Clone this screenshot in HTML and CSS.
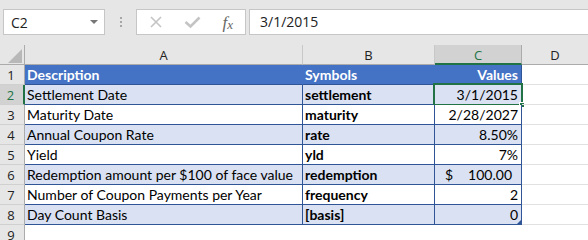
FILE: index.html
```html
<!DOCTYPE html>
<html>
<head>
<meta charset="utf-8">
<link rel="stylesheet" href="styles.css">
</head>
<body>
<div class="toolbar">
  <div class="namebox"><span class="nb-text">C2</span><span class="nb-arrow"></span></div>
  <div class="dots"><i></i><i></i><i></i></div>
  <div class="fbtns">
    <svg class="ico" width="14" height="14" viewBox="0 0 14 14"><path d="M2 2 L12 12 M12 2 L2 12" stroke="#c4c4c4" stroke-width="1.6" fill="none"/></svg>
    <svg class="ico" width="17" height="14" viewBox="0 0 17 14"><path d="M1.5 7 L6.5 11.5 L15.5 2.5" stroke="#c4c4c4" stroke-width="2.6" fill="none"/></svg>
    <span class="fx">f<span class="fxx">x</span></span>
  </div>
  <div class="finput">3/1/2015</div>
</div>
<div class="sheet">
  <div class="corner"><svg width="24" height="20" viewBox="0 0 24 20"><polygon points="8,18 22,18 22,4" fill="#b8b8b8"/></svg></div>
  <div class="ch">A</div>
  <div class="ch">B</div>
  <div class="ch sel">C</div>
  <div class="ch last">D</div>

  <div class="rh">1</div>
  <div class="c hd">Description</div>
  <div class="c hd">Symbols</div>
  <div class="c hd r end">Values</div>
  <div class="c e"></div>

  <div class="rh rsel">2</div>
  <div class="c bd">Settlement Date</div>
  <div class="c bd b">settlement</div>
  <div class="c bd r end active">3/1/2015<span class="selbox"><span class="handle"></span></span></div>
  <div class="c e"></div>

  <div class="rh">3</div>
  <div class="c wt">Maturity Date</div>
  <div class="c wt b">maturity</div>
  <div class="c wt r end">2/28/2027</div>
  <div class="c e"></div>

  <div class="rh">4</div>
  <div class="c bd">Annual Coupon Rate</div>
  <div class="c bd b">rate</div>
  <div class="c bd r end">8.50%</div>
  <div class="c e"></div>

  <div class="rh">5</div>
  <div class="c wt">Yield</div>
  <div class="c wt b">yld</div>
  <div class="c wt r end">7%</div>
  <div class="c e"></div>

  <div class="rh">6</div>
  <div class="c bd">Redemption amount per $100 of face value</div>
  <div class="c bd b">redemption</div>
  <div class="c bd end acct"><span>$</span><span>100.00</span></div>
  <div class="c e"></div>

  <div class="rh">7</div>
  <div class="c wt">Number of Coupon Payments per Year</div>
  <div class="c wt b">frequency</div>
  <div class="c wt r end">2</div>
  <div class="c e"></div>

  <div class="rh">8</div>
  <div class="c bd">Day Count Basis</div>
  <div class="c bd b">[basis]</div>
  <div class="c bd r end lastc">0<span class="tri"></span></div>
  <div class="c e"></div>

  <div class="rh">9</div>
  <div class="c e"></div>
  <div class="c e"></div>
  <div class="c e"></div>
  <div class="c e"></div>
</div>
</body>
</html>
```
FILE: styles.css
```css
* { box-sizing: border-box; }
html, body { margin: 0; padding: 0; }
body {
  width: 588px;
  height: 240px;
  overflow: hidden;
  background: #ffffff;
  font-family: Lato, "Open Sans", sans-serif;
}
.toolbar {
  height: 45px;
  background: #e6e6e6;
  display: flex;
  align-items: flex-start;
  padding: 9px 0 0 3px;
}
.namebox {
  width: 102px;
  height: 26px;
  background: #fff;
  border: 1px solid #c6c6c6;
  display: flex;
  align-items: center;
  justify-content: space-between;
  padding: 0 6px 0 7px;
  font-family: "Open Sans", sans-serif;
  font-size: 14px;
  color: #222;
}
.nb-arrow {
  width: 0; height: 0;
  border-left: 4px solid transparent;
  border-right: 4px solid transparent;
  border-top: 4px solid #777;
}
.dots {
  width: 31px;
  height: 26px;
  display: flex;
  flex-direction: column;
  align-items: center;
  justify-content: center;
  gap: 2px;
}
.dots i { display: block; width: 2px; height: 2px; background: #a6a6a6; }
.fbtns {
  width: 110px;
  height: 26px;
  background: #fff;
  border: 1px solid #c6c6c6;
  display: flex;
  align-items: center;
  justify-content: space-between;
  padding: 0 12px 0 12px;
}
.fx {
  font-family: "Liberation Serif", serif;
  font-style: italic;
  font-size: 17px;
  color: #666;
  line-height: 1;
}
.fxx { font-size: 13px; position: relative; top: 1px; }
.finput {
  flex: 1;
  height: 26px;
  margin-left: 3px;
  background: #fff;
  border: 1px solid #c6c6c6;
  border-right: none;
  font-family: "Open Sans", sans-serif;
  font-size: 14px;
  line-height: 24px;
  padding-left: 10px;
  color: #222;
}
.sheet {
  display: grid;
  grid-template-columns: 25px 278px 132px 87px 1fr;
  grid-template-rows: 20px repeat(9, 20px);
  background: #fff;
}
.corner, .ch, .rh {
  background: #e6e6e6;
  color: #222;
  font-family: "Open Sans", sans-serif;
  font-size: 13px;
}
.corner { border-right: 1px solid #ababab; border-bottom: 1px solid #ababab; }
.ch {
  border-right: 1px solid #c8c8c8;
  border-bottom: 1px solid #ababab;
  text-align: center;
  line-height: 20px;
}
.ch.sel {
  background: #d2d2d2;
  color: #217346;
  border-bottom: 2px solid #217346;
  border-right-color: #ababab;
}
.ch.last { border-right: none; }
.rh {
  border-right: 1px solid #ababab;
  border-bottom: 1px solid #d0d0d0;
  text-align: center;
  line-height: 20px;
  padding-right: 2px;
}
.rh.rsel {
  background: #d2d2d2;
  color: #217346;
  border-right: 2px solid #217346;
}
.c {
  font-size: 14px;
  line-height: 20px;
  padding: 0 3px 0 2px;
  white-space: nowrap;
  overflow: visible;
  color: #000;
  position: relative;
  border-bottom: 1px solid #2f5597;
  border-right: 1px solid #2f5597;
}
.c.e { border-bottom: 1px solid #e1e1e1; border-right: none; }
.c.hd { background: #4472c4; color: #fff; font-weight: bold; border-bottom-color: #2f5597; border-right-color: #4472c4; }
.c.hd.end { border-right-color: #2f5597; }
.c.bd { background: #d9e1f2; }
.c.wt { background: #fff; }
.c.b { font-weight: bold; }
.c.r { text-align: right; }
.acct { display: flex; justify-content: space-between; padding: 0 9px 0 10px; }
.selbox {
  position: absolute;
  left: -2px; top: -2px; right: -2px; bottom: -2px;
  border: 2px solid #217346;
  pointer-events: none;
}
.handle {
  position: absolute;
  right: -4px; bottom: -4px;
  width: 6px; height: 6px;
  background: #217346;
  border: 1px solid #fff;
}
.tri {
  position: absolute;
  right: 0; bottom: 0;
  width: 0; height: 0;
  border-left: 4px solid transparent;
  border-bottom: 4px solid #2f5597;
}
```
